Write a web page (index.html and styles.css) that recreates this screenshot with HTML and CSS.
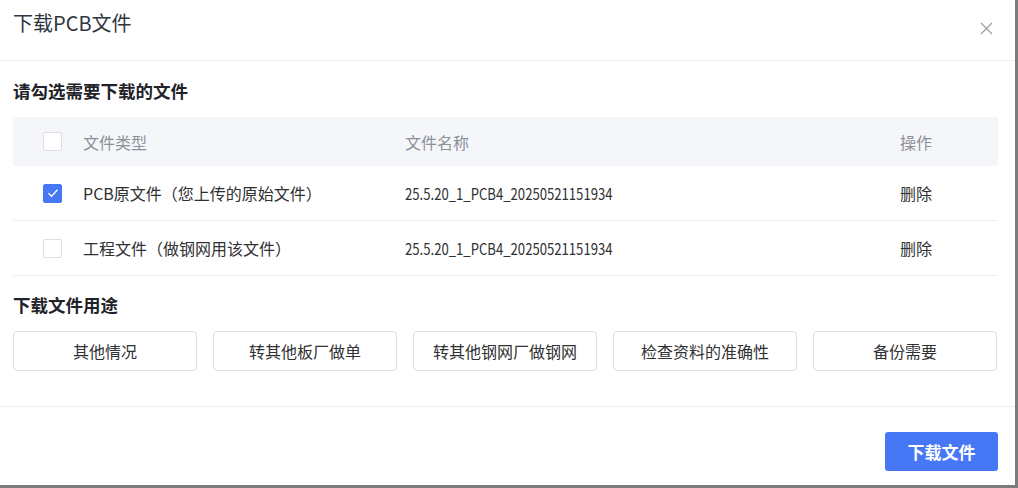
FILE: index.html
```html
<!DOCTYPE html>
<html lang="zh-CN">
<head>
<meta charset="utf-8">
<title>下载PCB文件</title>
<link rel="stylesheet" href="styles.css">
</head>
<body>
<div class="dialog">
  <div class="dialog-header">
    <span class="dialog-title">下载PCB文件</span>
    <span class="close" aria-label="关闭">
      <svg width="13" height="13" viewBox="0 0 13 13"><path d="M1 1L12 12M12 1L1 12" stroke="#9a9ca3" stroke-width="1.2" fill="none"/></svg>
    </span>
  </div>
  <div class="dialog-body">
    <div class="section-title first">请勾选需要下载的文件</div>
    <div class="table">
      <div class="tr thead">
        <div class="td c-check"><span class="checkbox"></span></div>
        <div class="td c-type">文件类型</div>
        <div class="td c-name">文件名称</div>
        <div class="td c-op">操作</div>
      </div>
      <div class="tr">
        <div class="td c-check"><span class="checkbox checked"><svg width="12" height="10" viewBox="0 0 12 10"><path d="M1.5 5.2L4.6 8.2L10.5 1.8" stroke="#fff" stroke-width="1.3" fill="none"/></svg></span></div>
        <div class="td c-type">PCB原文件（您上传的原始文件）</div>
        <div class="td c-name"><span class="fname">25.5.20_1_PCB4_20250521151934</span></div>
        <div class="td c-op">删除</div>
      </div>
      <div class="tr">
        <div class="td c-check"><span class="checkbox"></span></div>
        <div class="td c-type">工程文件（做钢网用该文件）</div>
        <div class="td c-name"><span class="fname">25.5.20_1_PCB4_20250521151934</span></div>
        <div class="td c-op">删除</div>
      </div>
    </div>
    <div class="section-title second">下载文件用途</div>
    <div class="purposes">
      <button class="purpose">其他情况</button>
      <button class="purpose">转其他板厂做单</button>
      <button class="purpose">转其他钢网厂做钢网</button>
      <button class="purpose">检查资料的准确性</button>
      <button class="purpose">备份需要</button>
    </div>
  </div>
  <div class="dialog-footer">
    <button class="primary">下载文件</button>
  </div>
</div>
</body>
</html>
```

FILE: styles.css
```css
* { box-sizing: border-box; }
html, body { margin: 0; padding: 0; }
body {
  background: #7d7d7d;
  width: 1018px;
  height: 488px;
  font-family: "Noto Sans CJK SC", "Noto Sans", sans-serif;
  color: #303133;
}
.dialog {
  width: 1015px;
  height: 485px;
  background: #fff;
  display: flex;
  flex-direction: column;
}
.dialog-header {
  height: 61px;
  border-bottom: 1px solid #ebeef5;
  display: flex;
  align-items: flex-start;
  justify-content: space-between;
  padding: 8px 22px 0 13px;
}
.dialog-title {
  font-size: 20px;
  line-height: 30px;
  color: #303640;
}
.close {
  display: flex;
  margin-top: 14px;
}
.dialog-body {
  padding: 0 17px 0 13px;
  border-bottom: 1px solid #ebeef5;
  height: 346px;
}
.section-title {
  font-size: 17.5px;
  font-weight: 700;
  line-height: 24px;
  color: #1f2329;
}
.section-title.first { margin-top: 18px; margin-bottom: 14px; }
.section-title.second { margin-top: 17px; margin-bottom: 14px; }
.table { display: flex; flex-direction: column; }
.tr {
  display: grid;
  grid-template-columns: 70px 322px 495px 1fr;
  align-items: center;
  height: 55px;
  border-bottom: 1px solid #ebeef5;
  font-size: 16px;
  color: #303133;
}
.tr.thead {
  height: 49px;
  background: #f5f6fa;
  border-bottom: none;
  color: #8c9099;
}
.td { white-space: nowrap; }
.fname {
  display: inline-block;
  font-size: 16px;
  transform: scaleX(0.82);
  transform-origin: left center;
}
.c-check { padding-left: 30px; display: flex; align-items: center; }
.checkbox {
  width: 19px;
  height: 19px;
  border: 1px solid #dcdfe6;
  border-radius: 2px;
  background: #fff;
  display: flex;
  align-items: center;
  justify-content: center;
}
.checkbox.checked { background: #4677f5; border-color: #4677f5; }
.purposes {
  display: flex;
  gap: 16px;
}
.purpose {
  width: 184px;
  height: 40px;
  border: 1px solid #dcdfe6;
  border-radius: 4px;
  background: #fff;
  font-family: inherit;
  font-size: 16px;
  color: #303133;
  padding: 0;
}
.dialog-footer {
  display: flex;
  justify-content: flex-end;
  padding: 25px 17px 0 0;
}
.primary {
  width: 113px;
  height: 39px;
  background: #4677f5;
  border: none;
  border-radius: 3px;
  color: #fff;
  font-family: inherit;
  font-size: 17px;
  font-weight: 700;
  padding: 0;
}
```
